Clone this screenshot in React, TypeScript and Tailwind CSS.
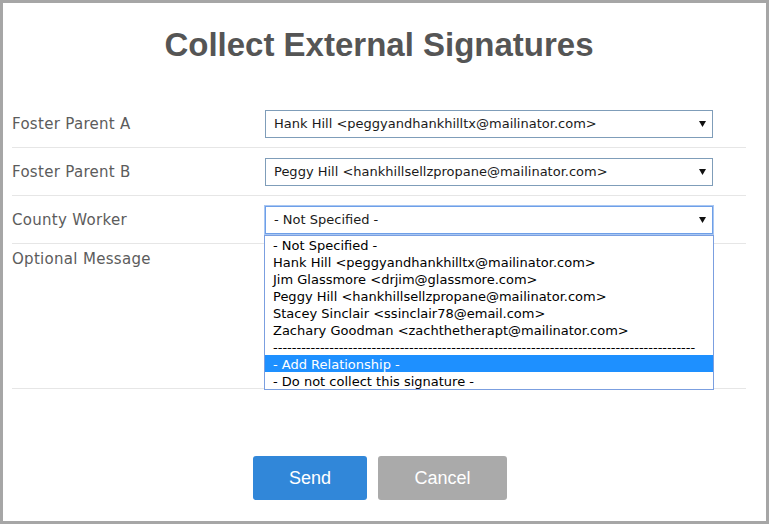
import React from "react";

const Arrow = () => (
  <svg width="7" height="6" viewBox="0 0 7 6" className="shrink-0">
    <polygon points="0,0 7,0 3.5,6" fill="#111" />
  </svg>
);

const Select = ({ value, focused }: { value: string; focused?: boolean }) => (
  <div
    className={
      focused
        ? "w-[448px] h-[28px] border border-[#6e9fe8] shadow-[0_0_0_1px_#a9c7f2] flex items-center justify-between pl-[8px] pr-[6px] bg-white"
        : "w-[448px] h-[28px] border border-[#7f9db9] flex items-center justify-between pl-[8px] pr-[6px] bg-white"
    }
  >
    <span className="text-[13px] text-[#1a1a1a] whitespace-nowrap">{value}</span>
    <Arrow />
  </div>
);

const options = [
  "- Not Specified -",
  "Hank Hill <peggyandhankhilltx@mailinator.com>",
  "Jim Glassmore <drjim@glassmore.com>",
  "Peggy Hill <hankhillsellzpropane@mailinator.com>",
  "Stacey Sinclair <ssinclair78@email.com>",
  "Zachary Goodman <zachthetherapt@mailinator.com>",
  "------------------------------------------------------------------------------------------",
  "- Add Relationship -",
  "- Do not collect this signature -",
];

const Label = ({ children }: { children: React.ReactNode }) => (
  <div className="w-[253px] text-[15px] text-[#5c5c5c] tracking-[0.3px] relative top-[1px]">
    {children}
  </div>
);

export default function App() {
  return (
    <div
      className="w-[769px] h-[524px] border-[3px] border-[#a6a6a6] bg-white overflow-hidden"
      style={{ fontFamily: '"DejaVu Sans", Verdana, sans-serif' }}
    >
      <div className="pl-[9px] pr-[20px]">
        <h1
          className="mt-[23px] mb-[36px] h-[38px] leading-[38px] text-center text-[33px] font-bold text-[#555555]"
          style={{ fontFamily: '"Liberation Sans", Arial, sans-serif' }}
        >
          Collect External Signatures
        </h1>

        <div className="h-[48px] border-b border-[#e6e6e6] flex items-center">
          <Label>Foster Parent A</Label>
          <Select value="Hank Hill <peggyandhankhilltx@mailinator.com>" />
        </div>
        <div className="h-[48px] border-b border-[#e6e6e6] flex items-center">
          <Label>Foster Parent B</Label>
          <Select value="Peggy Hill <hankhillsellzpropane@mailinator.com>" />
        </div>
        <div className="h-[48px] border-b border-[#e6e6e6] flex items-center">
          <Label>County Worker</Label>
          <div className="relative">
            <Select value="- Not Specified -" focused />
            <div className="absolute left-[-1px] top-[29px] w-[450px] border border-[#7b9fe0] bg-white z-10">
              {options.map((o, i) => (
                <div
                  key={i}
                  className={
                    i === 7
                      ? "h-[17px] leading-[17px] pl-[8px] text-[13px] whitespace-nowrap overflow-hidden bg-[#1e90ff] text-white"
                      : "h-[17px] leading-[17px] pl-[8px] text-[13px] whitespace-nowrap overflow-hidden text-black"
                  }
                >
                  <span className="relative top-[1px]">{o}</span>
                </div>
              ))}
            </div>
          </div>
        </div>
        <div className="h-[145px] border-b border-[#e6e6e6] pt-[4px]">
          <div className="text-[15px] text-[#5c5c5c] tracking-[0.3px]">Optional Message</div>
        </div>

        <div
          className="mt-[67px] ml-[2px] flex justify-center gap-[11px]"
          style={{ fontFamily: '"Liberation Sans", Arial, sans-serif' }}
        >
          <button className="w-[114px] h-[44px] rounded-[3px] bg-[#3187d9] text-white text-[18px]">
            Send
          </button>
          <button className="w-[129px] h-[44px] rounded-[3px] bg-[#aaaaaa] text-white text-[18px]">
            Cancel
          </button>
        </div>
      </div>
    </div>
  );
}
